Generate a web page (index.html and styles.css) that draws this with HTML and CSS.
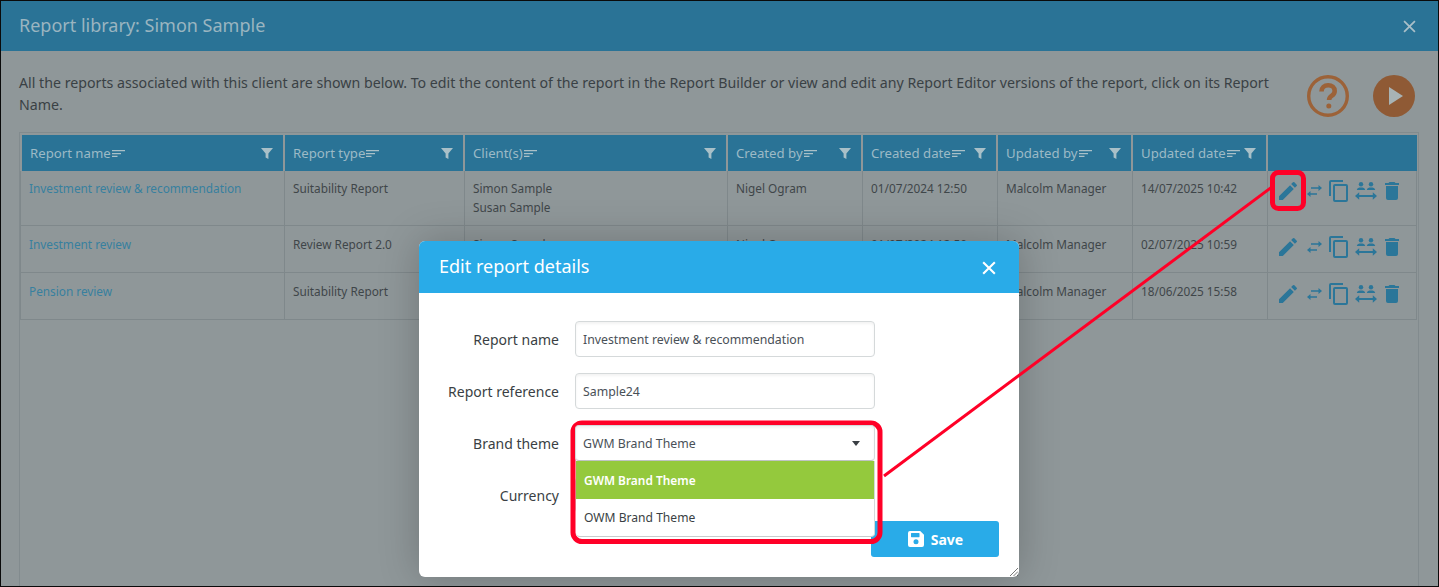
FILE: index.html
```html
<!DOCTYPE html>
<html lang="en">
<head>
<meta charset="utf-8">
<title>Report library</title>
<link rel="stylesheet" href="styles.css">
</head>
<body>
<svg width="0" height="0" class="defs">
  <symbol id="i-sort" viewBox="0 0 13 7"><path d="M0 0h13v1.3H0zM0 2.9h9v1.3H0zM0 5.7h5.5V7H0z"/></symbol>
  <symbol id="i-filter" viewBox="0 0 12 11"><path d="M0 0h12L7.4 5.4V11L4.6 9.4v-4z"/></symbol>
  <symbol id="i-edit" viewBox="0 0 24 24"><path d="M3 17.25V21h3.75L17.81 9.94l-3.75-3.75L3 17.25zM20.71 7.04a1 1 0 0 0 0-1.41l-2.34-2.34a1 1 0 0 0-1.41 0l-1.83 1.83 3.75 3.75 1.83-1.83z"/></symbol>
  <symbol id="i-swap" viewBox="0 0 24 24"><path d="M9 8.200h7.500V6l3.500 3-3.500 3V9.800H9zM5 15l3.500-3v2.200H15v1.600H8.500V18z"/></symbol>
  <symbol id="i-copy" viewBox="0 0 24 24"><path d="M15 1H3a2 2 0 0 0-2 2v14h2V3h12V1zm3 4H7a2 2 0 0 0-2 2v14a2 2 0 0 0 2 2h11a2 2 0 0 0 2-2V7a2 2 0 0 0-2-2zm0 16H7V7h11v14z"/></symbol>
  <symbol id="i-group" viewBox="0 0 24 24"><circle cx="7" cy="5.200" r="2.200"/><circle cx="17" cy="5.200" r="2.200"/><path d="M2.800 11c.3-1.800 2-2.400 4.200-2.400s3.900.6 4.200 2.400zM12.800 11c.3-1.800 2-2.400 4.200-2.400s3.900.6 4.200 2.400zM1 17l4.200-3.800v2.900h13.600v-2.900L23 17l-4.200 3.800v-2.900H5.200v2.900z"/></symbol>
  <symbol id="i-delete" viewBox="0 0 24 24"><path d="M6 19a2 2 0 0 0 2 2h8a2 2 0 0 0 2-2V7H6v12zM19 4h-3.500l-1-1h-5l-1 1H5v2h14V4z"/></symbol>
</svg>

<div class="window">
  <header class="win-head">
    <h1 class="win-title">Report library: Simon Sample</h1>
    <svg class="win-close" viewBox="0 0 12 12"><path d="M1 1l10 10M11 1L1 11"/></svg>
  </header>
  <div class="win-body">
    <div class="intro">
      <p class="intro-text">All the reports associated with this client are shown below. To edit the content of the report in the Report Builder or view and edit any Report Editor versions of the report, click on its Report Name.</p>
      <div class="intro-actions">
        <svg class="round-icon" viewBox="0 0 42 42"><circle class="help-ring" cx="21" cy="21" r="19.300"/><path class="help-q" d="M14.500 16.500c0-3.800 2.900-6.300 6.700-6.300 3.700 0 6.500 2.300 6.500 5.700 0 2.400-1.200 3.700-3.100 5-1.700 1.200-2.500 2-2.500 4.100"/><circle class="help-dot" cx="21.800" cy="31" r="2.500"/></svg>
        <svg class="round-icon" viewBox="0 0 42 42"><circle class="play-disc" cx="21" cy="21" r="21"/><path class="play-tri" d="M16 12l14 9-14 9z"/></svg>
      </div>
    </div>
    <div class="table-box">
      <table class="reports">
        <thead>
          <tr>
            <th class="c-name"><div class="th-in"><span>Report name</span><svg class="sort"><use href="#i-sort"/></svg><svg class="filter"><use href="#i-filter"/></svg></div></th>
            <th class="c-type"><div class="th-in"><span>Report type</span><svg class="sort"><use href="#i-sort"/></svg><svg class="filter"><use href="#i-filter"/></svg></div></th>
            <th class="c-client"><div class="th-in"><span>Client(s)</span><svg class="sort"><use href="#i-sort"/></svg><svg class="filter"><use href="#i-filter"/></svg></div></th>
            <th class="c-mid"><div class="th-in"><span>Created by</span><svg class="sort"><use href="#i-sort"/></svg><svg class="filter"><use href="#i-filter"/></svg></div></th>
            <th class="c-mid"><div class="th-in"><span>Created date</span><svg class="sort"><use href="#i-sort"/></svg><svg class="filter"><use href="#i-filter"/></svg></div></th>
            <th class="c-mid"><div class="th-in"><span>Updated by</span><svg class="sort"><use href="#i-sort"/></svg><svg class="filter"><use href="#i-filter"/></svg></div></th>
            <th class="c-mid"><div class="th-in"><span>Updated date</span><svg class="sort"><use href="#i-sort"/></svg><svg class="filter"><use href="#i-filter"/></svg></div></th>
            <th class="c-act"></th>
          </tr>
        </thead>
        <tbody>
          <tr class="row-tall">
            <td><a class="rep-link" href="#">Investment review &amp; recommendation</a></td>
            <td>Suitability Report</td>
            <td>Simon Sample<br>Susan Sample</td>
            <td>Nigel Ogram</td>
            <td>01/07/2024 12:50</td>
            <td>Malcolm Manager</td>
            <td>14/07/2025 10:42</td>
            <td class="acts"><div class="act-row"><svg><use href="#i-edit"/></svg><svg><use href="#i-swap"/></svg><svg><use href="#i-copy"/></svg><svg><use href="#i-group"/></svg><svg><use href="#i-delete"/></svg></div></td>
          </tr>
          <tr class="row-short">
            <td><a class="rep-link" href="#">Investment review</a></td>
            <td>Review Report 2.0</td>
            <td>Simon Sample</td>
            <td>Nigel Ogram</td>
            <td>01/07/2024 12:50</td>
            <td>Malcolm Manager</td>
            <td>02/07/2025 10:59</td>
            <td class="acts"><div class="act-row"><svg><use href="#i-edit"/></svg><svg><use href="#i-swap"/></svg><svg><use href="#i-copy"/></svg><svg><use href="#i-group"/></svg><svg><use href="#i-delete"/></svg></div></td>
          </tr>
          <tr class="row-short">
            <td><a class="rep-link" href="#">Pension review</a></td>
            <td>Suitability Report</td>
            <td>Simon Sample</td>
            <td>Nigel Ogram</td>
            <td>01/07/2024 12:50</td>
            <td>Malcolm Manager</td>
            <td>18/06/2025 15:58</td>
            <td class="acts"><div class="act-row"><svg><use href="#i-edit"/></svg><svg><use href="#i-swap"/></svg><svg><use href="#i-copy"/></svg><svg><use href="#i-group"/></svg><svg><use href="#i-delete"/></svg></div></td>
          </tr>
        </tbody>
      </table>
    </div>
  </div>

  <section class="modal">
    <header class="modal-head">
      <h2 class="modal-title">Edit report details</h2>
      <svg class="modal-close" viewBox="0 0 12 12"><path d="M1 1l10 10M11 1L1 11"/></svg>
    </header>
    <div class="modal-body">
      <div class="field"><span class="field-label">Report name</span><div class="control">Investment review &amp; recommendation</div></div>
      <div class="field"><span class="field-label">Report reference</span><div class="control">Sample24</div></div>
      <div class="field field-open"><span class="field-label">Brand theme</span>
        <div class="control control-select">GWM Brand Theme<span class="caret"></span>
          <ul class="menu">
            <li class="menu-item menu-active">GWM Brand Theme</li>
            <li class="menu-item">OWM Brand Theme</li>
          </ul>
        </div>
      </div>
      <div class="field"><span class="field-label">Currency</span><div class="control"></div></div>
      <div class="modal-foot">
        <button class="save" type="button"><svg class="save-icon" viewBox="0 0 16 16"><path fill-rule="evenodd" d="M2 0h10.200L16 3.800V14a2 2 0 0 1-2 2H2a2 2 0 0 1-2-2V2a2 2 0 0 1 2-2zm1 2.500v3.200c0 .3.200.5.500.5h7.500c.3 0 .5-.2.500-.5V2.500c0-.3-.2-.5-.5-.5H3.500c-.3 0-.5.200-.5.500zM8 13.300a2.500 2.500 0 1 0 0-5 2.500 2.500 0 0 0 0 5z"/></svg>Save</button>
      </div>
    </div>
    <svg class="grip" viewBox="0 0 8 8"><path d="M0 8l8-8M3.500 8L8 3.500M7 8l1-1"/></svg>
  </section>

  <svg class="callouts" viewBox="0 0 1439 587">
    <path class="callout" d="M1272 187L884 476"/>
    <rect class="callout" x="1272.500" y="172.500" width="31" height="36" rx="6"/>
    <rect class="callout" x="573" y="423" width="307" height="118.500" rx="9"/>
  </svg>
</div>
</body>
</html>
```

FILE: styles.css
```css
* { box-sizing: border-box; }
html, body { margin: 0; height: 100%; }
body { font-family: "Noto Sans", "Liberation Sans", sans-serif; overflow: hidden; }
.defs { position: absolute; }

.window {
  position: relative;
  height: 587px;
  border: 1px solid #0a0a0a;
  background: #8f9799;
  display: flex;
  flex-direction: column;
  overflow: hidden;
}

.win-head {
  flex: none;
  height: 50px;
  background: #2a7396;
  display: flex;
  align-items: center;
  justify-content: space-between;
  padding: 0 22px 2px 18px;
}
.win-title { margin: 0; font-size: 18px; font-weight: 400; color: #9ab5c0; }
.win-close { width: 13px; height: 13px; fill: none; stroke: #a9bfc8; stroke-width: 1.600; margin-top: 2px; }

.win-body { flex: 1; display: flex; flex-direction: column; padding: 21px 19px 0 18px; min-height: 0; }

.intro { display: flex; justify-content: space-between; height: 60px; }
.intro-text { margin: 0; width: 1265px; font-size: 14.200px; line-height: 22px; color: #3a4145; }
.intro-actions { display: flex; gap: 24px; padding: 3px 4px 0 0; }
.round-icon { width: 42px; height: 42px; }
.help-ring { fill: none; stroke: #9c6238; stroke-width: 3.400; }
.help-q { fill: none; stroke: #9c6238; stroke-width: 4.600; }
.help-dot { fill: #9c6238; }
.play-disc { fill: #8f5a35; }
.play-tri { fill: #a8b3b5; }

.table-box { flex: 1; width: 1400px; border: 1px solid #828b8e; border-bottom: 0; padding-top: 2px; }

.reports { border-collapse: separate; border-spacing: 0; table-layout: fixed; width: 1397px; font-size: 11.800px; color: #3f4649; }
.c-name { width: 265px; }
.c-type { width: 180px; }
.c-client { width: 263px; }
.c-mid { width: 135px; }
.c-act { width: 149px; }

.reports th {
  height: 36px;
  background: #2a7396;
  padding: 0 10px 0 8px;
  font-size: 13.200px;
  font-weight: 400;
  color: #9cbac6;
  text-align: left;
  border-right: 2px solid #8f9799;
}
.reports th:first-child { border-left: 2px solid #8f9799; }
.reports th:last-child { border-right: 0; }
.th-in { display: flex; align-items: center; white-space: nowrap; }
.sort { width: 13px; height: 7px; fill: #a9c0c8; flex: none; margin-left: 1px; }
.filter { width: 12px; height: 11px; fill: #a9c0c8; flex: none; margin-left: auto; }

.reports td {
  vertical-align: top;
  line-height: 19px;
  padding: 9px 8px 0;
  border-right: 1px solid #7f888b;
  border-bottom: 1px solid #7f888b;
  white-space: nowrap;
}
.reports td:first-child { border-left: 1px solid #7f888b; }
.row-tall td { height: 55px; padding-top: 8px; }
.row-short td { height: 47px; }
.rep-link { color: #37809f; text-decoration: none; }

.reports td.acts { padding-top: 8px; }
.row-short td.acts { padding-top: 9px; }
.act-row { display: flex; gap: 2px; }
.act-row svg { width: 24px; height: 24px; fill: #2b7699; flex: none; }

.modal {
  position: absolute;
  left: 418px;
  top: 240px;
  width: 600px;
  height: 336px;
  background: #fff;
  border-radius: 6px;
  box-shadow: 0 0 40px rgba(0, 0, 0, .22);
}
.modal-head {
  height: 52px;
  background: #29abe8;
  border-radius: 6px 6px 0 0;
  display: flex;
  align-items: center;
  justify-content: space-between;
  padding: 0 23px 2px 20px;
}
.modal-title { margin: 0; font-size: 18px; font-weight: 400; color: #fff; }
.modal-close { width: 14px; height: 14px; fill: none; stroke: #fff; stroke-width: 1.800; margin-top: 4px; }

.modal-body { padding: 28px 20px 0 0; display: flex; flex-direction: column; gap: 16px; }
.field { display: flex; align-items: center; height: 36px; gap: 16px; }
.field-open { position: relative; z-index: 1; }
.field-label { width: 140px; text-align: right; font-size: 14px; color: #3a3f44; }
.control {
  position: relative;
  width: 300px;
  height: 36px;
  border: 1px solid #d5d9da;
  border-radius: 4px;
  box-shadow: inset 0 2px 3px rgba(0, 0, 0, .05);
  padding: 0 7px;
  display: flex;
  align-items: center;
  font-size: 12.300px;
  color: #495057;
}
.control-select { justify-content: space-between; border-bottom-color: #bfc3c5; background: #fff; }
.caret { width: 0; height: 0; border: 4px solid transparent; border-top: 5px solid #3a3f44; border-bottom: 0; margin-right: 7px; }

.menu {
  position: absolute;
  left: 0;
  top: 35px;
  width: 299px;
  margin: 0;
  padding: 0;
  list-style: none;
  background: #fff;
  border-bottom: 1px solid #c8cccd;
  border-right: 1px solid #d5d9da;
  border-radius: 0 0 4px 4px;
}
.menu-item { height: 37px; padding: 0 8px; display: flex; align-items: center; font-size: 12.100px; color: #3a3f44; }
.menu-active { height: 38px; background: #94c93d; color: #fff; font-size: 11.900px; font-weight: 600; }

.modal-foot { display: flex; justify-content: flex-end; margin-top: -8px; }
.save {
  width: 128px;
  height: 36px;
  border: 0;
  border-radius: 3px;
  background: #29abe8;
  color: #fff;
  font: 700 14px "Noto Sans", "Liberation Sans", sans-serif;
  display: flex;
  align-items: center;
  justify-content: center;
  gap: 7px;
  padding: 0 0 0 1px;
}
.save-icon { width: 16px; height: 16px; fill: #fff; }
.grip { position: absolute; right: 1px; bottom: 1px; width: 8px; height: 8px; fill: none; stroke: #555; stroke-width: .8; }

.callouts { position: absolute; left: -1px; top: -1px; width: 1439px; height: 587px; pointer-events: none; }
.callout { fill: none; stroke: #ff0027; }
path.callout { stroke-width: 3; }
rect.callout { stroke-width: 5; }
```
